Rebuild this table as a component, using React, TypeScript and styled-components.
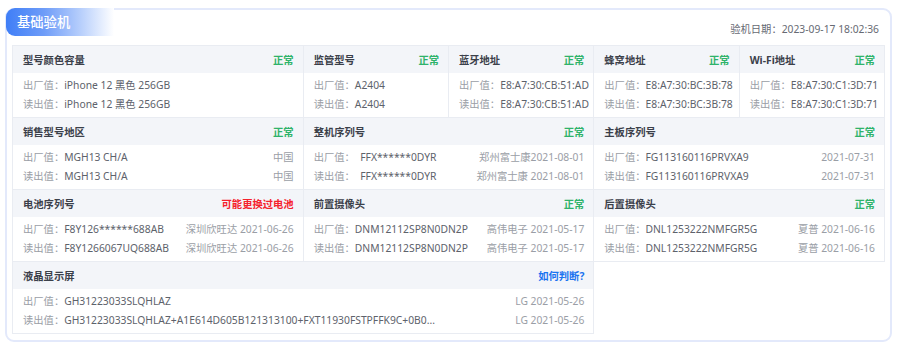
import React from "react";
import styled, { createGlobalStyle } from "styled-components";

const GlobalStyle = createGlobalStyle`
  html, body { margin: 0; padding: 0; background: #ffffff; }
  body { font-family: "Noto Sans", "Noto Sans CJK SC", sans-serif; font-size: 10.3px; }
  * { box-sizing: border-box; }
`;

const Card = styled.section`
  margin: 8px 0 0 5px;
  width: 887px;
  border: 2px solid #e3e9fb;
  border-radius: 9px;
  padding: 0 5px 6px 5px;
  background: #fff;
`;

const TitleBar = styled.div`
  display: flex;
  justify-content: space-between;
  align-items: flex-start;
  height: 35px;
`;

const Tag = styled.div`
  margin: -2px 0 0 -6px;
  width: 108px;
  height: 28px;
  border-radius: 9px 0 0 9px;
  background: linear-gradient(90deg, #3f7ef7 0%, #6e9cf8 35%, #b9d0fc 70%, #ffffff 100%);
  color: #fff;
  font-family: "Noto Sans CJK SC", sans-serif;
  font-size: 13.3px;
  font-weight: 500;
  line-height: 28px;
  padding-left: 11px;
`;

const DateText = styled.div`
  margin: 10px 6px 0 0;
  line-height: 18px;
  color: #666a73;
  font-size: 10.3px;
`;

const Table = styled.div`
  display: grid;
  grid-template-columns: repeat(6, minmax(0, 1fr));
  border-top: 1px solid #e9ecf2;
  border-left: 1px solid #e9ecf2;
`;

const Cell = styled.div<{ $span: number }>`
  grid-column: span ${(p) => p.$span};
  display: flex;
  flex-direction: column;
  min-width: 0;
  border-right: 1px solid #e9ecf2;
  border-bottom: 1px solid #e9ecf2;
`;

const Head = styled.div`
  display: flex;
  justify-content: space-between;
  align-items: center;
  height: 27px;
  padding: 0 9px 0 10px;
  background: #f3f5f9;
`;

const HeadTitle = styled.span`
  font-weight: 700;
  color: #3b404a;
  font-size: 10.3px;
`;

const Status = styled.span<{ $tone: "ok" | "warn" | "link" }>`
  font-weight: 700;
  font-size: 10.3px;
  color: ${(p) => (p.$tone === "ok" ? "#2fb36a" : p.$tone === "warn" ? "#f5222d" : "#1a73f0")};
`;

const Body = styled.div`
  padding: 3px 9px 3px 10px;
  flex: 1;
`;

const Line = styled.div`
  display: flex;
  justify-content: space-between;
  gap: 8px;
  line-height: 19px;
  white-space: nowrap;
`;

const Label = styled.span`
  color: #9a9ea6;
`;

const Value = styled.span`
  color: #5d626b;
`;

const Extra = styled.span`
  color: #9a9ea6;
`;

type LineData = { label: string; value: string; extra?: string };
type CellData = {
  title: string;
  status: string;
  tone: "ok" | "warn" | "link";
  span: number;
  lines: LineData[];
};

const cells: CellData[] = [
  {
    title: "型号颜色容量", status: "正常", tone: "ok", span: 2,
    lines: [
      { label: "出厂值：", value: "iPhone 12 黑色 256GB" },
      { label: "读出值：", value: "iPhone 12 黑色 256GB" },
    ],
  },
  {
    title: "监管型号", status: "正常", tone: "ok", span: 1,
    lines: [
      { label: "出厂值：", value: "A2404" },
      { label: "读出值：", value: "A2404" },
    ],
  },
  {
    title: "蓝牙地址", status: "正常", tone: "ok", span: 1,
    lines: [
      { label: "出厂值：", value: "E8:A7:30:CB:51:AD" },
      { label: "读出值：", value: "E8:A7:30:CB:51:AD" },
    ],
  },
  {
    title: "蜂窝地址", status: "正常", tone: "ok", span: 1,
    lines: [
      { label: "出厂值：", value: "E8:A7:30:BC:3B:78" },
      { label: "读出值：", value: "E8:A7:30:BC:3B:78" },
    ],
  },
  {
    title: "Wi-Fi地址", status: "正常", tone: "ok", span: 1,
    lines: [
      { label: "出厂值：", value: "E8:A7:30:C1:3D:71" },
      { label: "读出值：", value: "E8:A7:30:C1:3D:71" },
    ],
  },
  {
    title: "销售型号地区", status: "正常", tone: "ok", span: 2,
    lines: [
      { label: "出厂值：", value: "MGH13 CH/A", extra: "中国" },
      { label: "读出值：", value: "MGH13 CH/A", extra: "中国" },
    ],
  },
  {
    title: "整机序列号", status: "正常", tone: "ok", span: 2,
    lines: [
      { label: "出厂值：", value: "\u00a0 FFX******0DYR", extra: "郑州富士康2021-08-01" },
      { label: "读出值：", value: "\u00a0 FFX******0DYR", extra: "郑州富士康 2021-08-01" },
    ],
  },
  {
    title: "主板序列号", status: "正常", tone: "ok", span: 2,
    lines: [
      { label: "出厂值：", value: "FG113160116PRVXA9", extra: "2021-07-31" },
      { label: "读出值：", value: "FG113160116PRVXA9", extra: "2021-07-31" },
    ],
  },
  {
    title: "电池序列号", status: "可能更换过电池", tone: "warn", span: 2,
    lines: [
      { label: "出厂值：", value: "F8Y126******688AB", extra: "深圳欣旺达 2021-06-26" },
      { label: "读出值：", value: "F8Y1266067UQ688AB", extra: "深圳欣旺达 2021-06-26" },
    ],
  },
  {
    title: "前置摄像头", status: "正常", tone: "ok", span: 2,
    lines: [
      { label: "出厂值：", value: "DNM12112SP8N0DN2P", extra: "高伟电子 2021-05-17" },
      { label: "读出值：", value: "DNM12112SP8N0DN2P", extra: "高伟电子 2021-05-17" },
    ],
  },
  {
    title: "后置摄像头", status: "正常", tone: "ok", span: 2,
    lines: [
      { label: "出厂值：", value: "DNL1253222NMFGR5G", extra: "夏普 2021-06-16" },
      { label: "读出值：", value: "DNL1253222NMFGR5G", extra: "夏普 2021-06-16" },
    ],
  },
  {
    title: "液晶显示屏", status: "如何判断?", tone: "link", span: 4,
    lines: [
      { label: "出厂值：", value: "GH31223033SLQHLAZ", extra: "LG 2021-05-26" },
      {
        label: "读出值：",
        value: "GH31223033SLQHLAZ+A1E614D605B121313100+FXT11930FSTPFFK9C+0B0...",
        extra: "LG 2021-05-26",
      },
    ],
  },
];

export default function App() {
  return (
    <>
      <GlobalStyle />
      <Card>
        <TitleBar>
          <Tag>基础验机</Tag>
          <DateText>验机日期：2023-09-17 18:02:36</DateText>
        </TitleBar>
        <Table>
          {cells.map((c) => (
            <Cell key={c.title} $span={c.span}>
              <Head>
                <HeadTitle>{c.title}</HeadTitle>
                <Status $tone={c.tone}>{c.status}</Status>
              </Head>
              <Body>
                {c.lines.map((l, i) => (
                  <Line key={i}>
                    <span>
                      <Label>{l.label}</Label>
                      <Value>{l.value}</Value>
                    </span>
                    {l.extra && <Extra>{l.extra}</Extra>}
                  </Line>
                ))}
              </Body>
            </Cell>
          ))}
        </Table>
      </Card>
    </>
  );
}
